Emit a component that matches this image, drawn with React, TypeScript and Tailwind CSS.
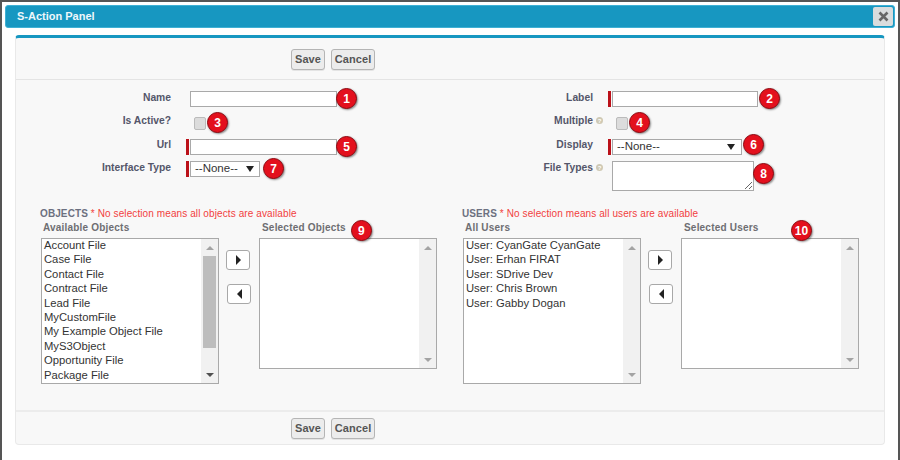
import type { ReactNode } from 'react'

const objects = [
  'Account File',
  'Case File',
  'Contact File',
  'Contract File',
  'Lead File',
  'MyCustomFile',
  'My Example Object File',
  'MyS3Object',
  'Opportunity File',
  'Package File',
]

const users = [
  'User: CyanGate CyanGate',
  'User: Erhan FIRAT',
  'User: SDrive Dev',
  'User: Chris Brown',
  'User: Gabby Dogan',
]

function Badge({ n, className = '' }: { n: number; className?: string }) {
  return (
    <span
      className={`flex h-[21px] w-[21px] shrink-0 items-center justify-center rounded-full border-[1.5px] border-[#8e0a12] bg-[#e3101d] text-[12px] font-bold leading-none text-white shadow-[1px_1px_2px_rgba(0,0,0,0.45)] ${className}`}
    >
      {n}
    </span>
  )
}

function ActionButtons() {
  return (
    <div className="ml-[275px] flex gap-[6px]">
      <button className="h-[21px] w-[34px] rounded-[3px] border border-[#b5b5b5] bg-[#ececec] text-[11px] font-bold tracking-[0.1px] text-[#555] shadow-[0_1px_0_rgba(0,0,0,0.08)]">
        Save
      </button>
      <button className="h-[21px] w-[44px] rounded-[3px] border border-[#b5b5b5] bg-[#ececec] text-[11px] font-bold tracking-[0.1px] text-[#555] shadow-[0_1px_0_rgba(0,0,0,0.08)]">
        Cancel
      </button>
    </div>
  )
}

function Help() {
  return (
    <span className="-mr-[10px] ml-[3px] inline-flex h-[7px] w-[7px] items-center justify-center rounded-full bg-[#cfc9b4] text-[6px] font-bold leading-none text-white">
      ?
    </span>
  )
}

function Row({
  label,
  help,
  required,
  height,
  labelHeight = 'h-[13px]',
  children,
}: {
  label: string
  help?: boolean
  required?: boolean
  height: string
  labelHeight?: string
  children: ReactNode
}) {
  return (
    <div className={`flex items-start ${height}`}>
      <div className={`flex w-[155px] items-center justify-end text-[10.3px] font-bold text-[#54566a] ${labelHeight}`}>
        {label}
        {help && <Help />}
      </div>
      <div className={`ml-[15px] mr-px h-[16px] w-[3px] ${required ? 'bg-[#bb1119]' : ''}`} />
      {children}
    </div>
  )
}

function TextInput({ width }: { width: string }) {
  return <input type="text" className={`h-[16px] border border-[#a9a9a9] bg-white outline-none ${width}`} />
}

function CheckBox() {
  return (
    <input
      type="checkbox"
      className="ml-[4px] mt-[3px] h-[13px] w-[12px] appearance-none rounded-[2px] border border-[#bbb] bg-[#dcdcdc]"
    />
  )
}

function Select({ className = '' }: { className?: string }) {
  return (
    <div
      className={`flex h-[16px] items-center justify-between border border-[#a9a9a9] bg-white pl-[4px] text-[11.5px] text-[#333] ${className}`}
    >
      <span>--None--</span>
      <span className="h-0 w-0 border-x-[4px] border-t-[6px] border-x-transparent border-t-[#222]" />
    </div>
  )
}

function ListBox({
  items = [],
  tall,
  thumb,
}: {
  items?: string[]
  tall?: boolean
  thumb?: boolean
}) {
  return (
    <div className={`flex w-[178px] border border-[#a9a9a9] bg-white ${tall ? 'h-[146px]' : 'h-[131px]'}`}>
      <ul className="min-w-0 flex-1 -translate-y-px pl-[2px] text-[11.25px] leading-[14.4px] text-[#333]">
        {items.map((item) => (
          <li key={item} className="whitespace-nowrap">
            {item}
          </li>
        ))}
      </ul>
      <div className="flex w-[17px] flex-col items-center bg-[#f1f1f1] pb-[6px] pt-[7px]">
        <span className="h-0 w-0 border-x-[4px] border-b-[4px] border-x-transparent border-b-[#a3a3a3]" />
        {thumb && <span className="mt-[6px] h-[92px] w-[13px] bg-[#bdbdbd]" />}
        <span
          className={`mt-auto h-0 w-0 border-x-[4px] border-t-[4px] border-x-transparent ${thumb ? 'border-t-[#505050]' : 'border-t-[#a3a3a3]'}`}
        />
      </div>
    </div>
  )
}

function ArrowButton({ left }: { left?: boolean }) {
  return (
    <button
      className={`flex h-[20px] w-[24px] items-center justify-center rounded-[3px] border border-[#a8a8a8] bg-white ${left ? 'ml-px' : ''}`}
    >
      {left ? (
        <span className="h-0 w-0 border-y-[5px] border-r-[5px] border-y-transparent border-r-[#222]" />
      ) : (
        <span className="h-0 w-0 border-y-[5px] border-l-[5px] border-y-transparent border-l-[#222]" />
      )}
    </button>
  )
}

function DualList({
  title,
  note,
  leftTitle,
  rightTitle,
  items,
  thumb,
  badge,
  badgeClass,
}: {
  title: string
  note: string
  leftTitle: string
  rightTitle: string
  items: string[]
  thumb?: boolean
  badge: number
  badgeClass: string
}) {
  return (
    <div className="pl-[24px]">
      <div className="h-[12px] whitespace-nowrap text-[10px] leading-[12px] tracking-[0.1px] text-[#f24040]">
        <span className="font-bold text-[#6c7080]">{title}</span> * {note}
      </div>
      <div className="relative flex h-[18px] text-[10px] font-bold leading-[15px] tracking-[0.2px] text-[#6e6e72]">
        <span className="ml-[3px] w-[216px]">{leftTitle}</span>
        <span className="ml-[3px]">{rightTitle}</span>
        <Badge n={badge} className={`absolute top-0 ${badgeClass}`} />
      </div>
      <div className="ml-px flex">
        <ListBox items={items} tall thumb={thumb} />
        <div className="ml-[7px] mr-[8px] mt-[12px] flex w-[25px] flex-col gap-[14px]">
          <ArrowButton />
          <ArrowButton left />
        </div>
        <ListBox />
      </div>
    </div>
  )
}

export default function App() {
  return (
    <div className="h-[460px] w-[900px] overflow-hidden border-x-2 border-t-2 border-x-[#555] border-t-[#555] bg-white font-['Liberation_Sans',Arial,sans-serif]">
      <div className="mx-[3px] mt-[3px] flex h-[23px] items-center justify-between rounded-[3px] border border-[#3fb0d4] bg-[#1797c1] pl-[11px] pr-[1px]">
        <span className="text-[11px] font-bold text-[#eef7fb]">S-Action Panel</span>
        <span className="flex h-[19px] w-[20px] items-center justify-center rounded-[2px] bg-[#d9dcdd] text-[#666]">
          <svg width="11" height="11" viewBox="0 0 11 11" fill="none" stroke="currentColor" strokeWidth="2.6">
            <path d="M1.5 1.5l8 8M9.5 1.5l-8 8" />
          </svg>
        </span>
      </div>

      <div className="ml-[13px] mr-[13px] mt-[7px] flex h-[410px] flex-col rounded-[4px] border border-t-[3px] border-[#e9e9e9] border-t-[#1797c1] bg-[#f8f8f8]">
        <div className="h-[42px] shrink-0 border-b border-[#e4e4e4] pt-[11px]">
          <ActionButtons />
        </div>

        <div className="flex-1">
          <div className="grid grid-cols-[422px_1fr] pt-[11px]">
            <div>
              <Row label="Name" height="h-[23px]">
                <TextInput width="w-[147px]" />
                <Badge n={1} className="-ml-[1px] -mt-[3px]" />
              </Row>
              <Row label="Is Active?" height="h-[25px]">
                <CheckBox />
                <Badge n={3} className="ml-[1px] -mt-[2px]" />
              </Row>
              <Row label="Url" required height="h-[22px]" labelHeight="h-[11px]">
                <TextInput width="w-[147px]" />
                <Badge n={5} className="-ml-[1px] -mt-[3px]" />
              </Row>
              <Row label="Interface Type" required height="h-[47px]">
                <Select className="w-[70px] pr-[5px]" />
                <Badge n={7} className="ml-[3px] -mt-[3px]" />
              </Row>
            </div>
            <div>
              <Row label="Label" required height="h-[23px]">
                <TextInput width="w-[146px]" />
                <Badge n={2} className="ml-px -mt-[3px]" />
              </Row>
              <Row label="Multiple" help height="h-[25px]">
                <CheckBox />
                <Badge n={4} className="ml-[1px] -mt-[2px]" />
              </Row>
              <Row label="Display" required height="h-[22px]" labelHeight="h-[11px]">
                <Select className="w-[130px] pr-[6px]" />
                <Badge n={6} className="ml-[1px] -mt-[5px]" />
              </Row>
              <Row label="File Types" help height="h-[47px]">
                <textarea className="h-[30px] w-[142px] resize border border-[#a9a9a9] bg-white outline-none" />
                <Badge n={8} className="-ml-px mt-[2px]" />
              </Row>
            </div>
          </div>

          <div className="grid grid-cols-[422px_1fr]">
            <DualList
              title="OBJECTS"
              note="No selection means all objects are available"
              leftTitle="Available Objects"
              rightTitle="Selected Objects"
              items={objects}
              thumb
              badge={9}
              badgeClass="left-[311px]"
            />
            <DualList
              title="USERS"
              note="No selection means all users are available"
              leftTitle="All Users"
              rightTitle="Selected Users"
              items={users}
              badge={10}
              badgeClass="left-[329px]"
            />
          </div>
        </div>

        <div className="h-[34px] shrink-0 border-t-2 border-[#ececec] pt-[6px]">
          <ActionButtons />
        </div>
      </div>
    </div>
  )
}
